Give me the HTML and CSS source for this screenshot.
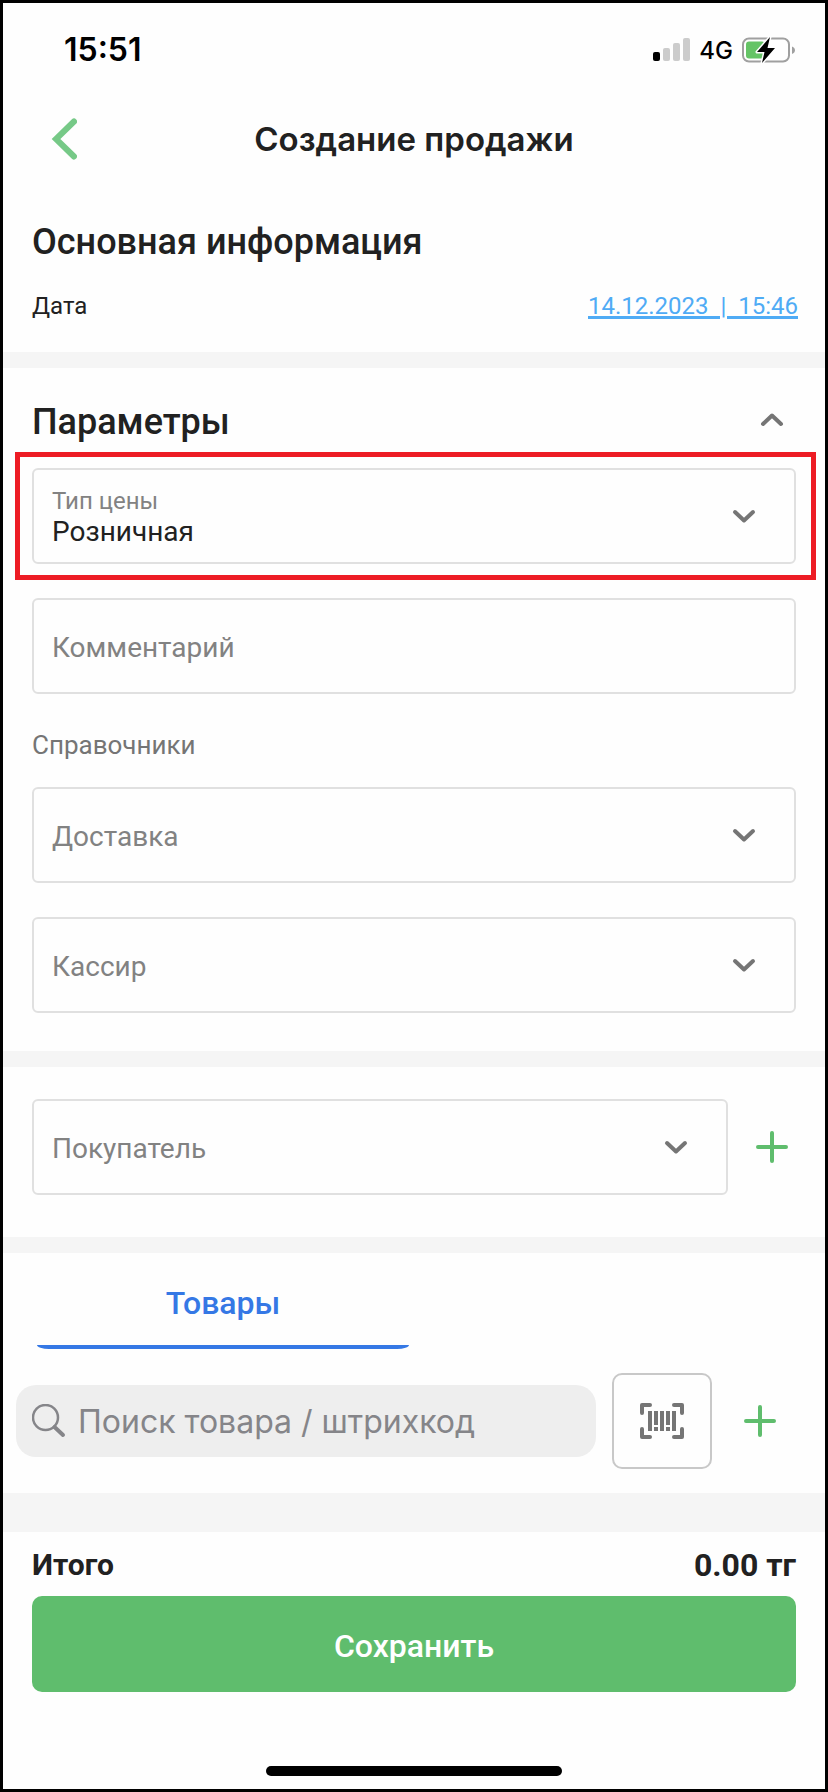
FILE: index.html
```html
<!DOCTYPE html>
<html lang="ru">
<head>
<meta charset="utf-8">
<meta name="viewport" content="width=device-width, initial-scale=1">
<title>Создание продажи</title>
<link rel="stylesheet" href="styles.css">
</head>
<body>
<div class="screen">
  <div class="status">
    <time class="status-time">15:51</time>
    <div class="status-icons">
      <svg width="37" height="24" viewBox="0 0 37 24" aria-hidden="true">
        <rect x="0" y="14" width="7" height="9" rx="2" fill="#000"/>
        <rect x="10" y="10" width="7" height="13" rx="2" fill="#ccc"/>
        <rect x="20" y="5" width="7" height="18" rx="2" fill="#ccc"/>
        <rect x="30" y="0" width="7" height="23" rx="2" fill="#ccc"/>
      </svg>
      <span class="network">4G</span>
      <svg width="54" height="26" viewBox="0 0 54 26" aria-hidden="true">
        <rect x="1" y="1.500" width="46" height="23" rx="6" fill="#fff" stroke="#a0a0a0" stroke-width="2"/>
        <path d="M50 9.500c4 1.500 4 6 0 7.500z" fill="#a0a0a0"/>
        <rect x="4" y="4.500" width="19" height="17" rx="3" fill="#65c466"/>
        <path d="M28 0 15 15h7.500L20 26 33 11h-7.500z" fill="#000" stroke="#fff" stroke-width="3" stroke-linejoin="round" paint-order="stroke"/>
      </svg>
    </div>
  </div>

  <header class="header">
    <button class="icon-button back" type="button" aria-label="Назад">
      <svg width="26" height="42" viewBox="0 0 26 42"><path d="M23 3.500 5 21 23 38.500" fill="none" stroke="#76c987" stroke-width="6" stroke-linecap="round" stroke-linejoin="miter"/></svg>
    </button>
    <h1 class="title">Создание продажи</h1>
  </header>

  <main class="content">
    <section class="section info">
      <h2 class="heading">Основная информация</h2>
      <div class="date-row">
        <span>Дата</span>
        <a class="date" href="#date">14.12.2023&nbsp; | &nbsp;15:46</a>
      </div>
    </section>

    <section class="section params">
      <div class="params-head">
        <h2 class="heading">Параметры</h2>
        <button class="icon-button" type="button" aria-label="Свернуть">
          <svg width="24" height="20" viewBox="0 0 24 20"><path d="M3 12 12 3.500l9 8.500" fill="none" stroke="#757575" stroke-width="4" stroke-linecap="round" stroke-linejoin="round"/></svg>
        </button>
      </div>
      <div class="field labelled highlighted">
        <label class="field-label" for="price">Тип цены</label>
        <select class="control filled" id="price"><option>Розничная</option></select>
        <svg class="arrow" width="24" height="16" viewBox="0 0 24 16"><path d="M3 4l9 8.500L21 4" /></svg>
      </div>
      <div class="field">
        <input class="control" type="text" placeholder="Комментарий" aria-label="Комментарий">
      </div>
      <h3 class="group-title">Справочники</h3>
      <div class="field">
        <select class="control" aria-label="Доставка"><option>Доставка</option></select>
        <svg class="arrow" width="24" height="16" viewBox="0 0 24 16"><path d="M3 4l9 8.500L21 4" /></svg>
      </div>
      <div class="field">
        <select class="control" aria-label="Кассир"><option>Кассир</option></select>
        <svg class="arrow" width="24" height="16" viewBox="0 0 24 16"><path d="M3 4l9 8.500L21 4" /></svg>
      </div>
    </section>

    <section class="section customer">
      <div class="field">
        <select class="control" aria-label="Покупатель"><option>Покупатель</option></select>
        <svg class="arrow" width="24" height="16" viewBox="0 0 24 16"><path d="M3 4l9 8.500L21 4" /></svg>
      </div>
      <button class="icon-button" type="button" aria-label="Добавить покупателя">
        <svg width="32" height="32" viewBox="0 0 32 32"><path d="M16 2v28M2 16h28" stroke="#5fbd6d" stroke-width="4" stroke-linecap="round"/></svg>
      </button>
    </section>

    <section class="section goods">
      <div class="tabs" role="tablist">
        <button class="tab" type="button" role="tab" aria-selected="true">Товары</button>
      </div>
      <div class="search-row">
        <div class="search">
          <svg width="34" height="34" viewBox="0 0 34 34" aria-hidden="true"><g fill="none" stroke="#858589" stroke-linecap="round"><circle cx="13.500" cy="13.500" r="12.500" stroke-width="2.500"/><path d="M22.500 23l8.500 8" stroke-width="4"/></g></svg>
          <input class="search-input" type="search" placeholder="Поиск товара / штрихкод" aria-label="Поиск товара">
        </div>
        <button class="scan" type="button" aria-label="Сканировать штрихкод">
          <svg width="44" height="36" viewBox="0 0 44 36">
            <path d="M2 10V2h8M34 2h8v8M42 26v8h-8M10 34H2v-8" fill="none" stroke="#757575" stroke-width="4" stroke-linecap="round" stroke-linejoin="round"/>
            <path d="M8 8h4v20H8zM14 8h4v14h-4zM14 24h4v4h-4zM20 8h4v20h-4zM26 8h4v14h-4zM26 24h4v4h-4zM32 8h4v20h-4z" fill="#757575"/>
          </svg>
        </button>
        <button class="icon-button add" type="button" aria-label="Добавить товар">
          <svg width="32" height="32" viewBox="0 0 32 32"><path d="M16 2v28M2 16h28" stroke="#5fbd6d" stroke-width="4" stroke-linecap="round"/></svg>
        </button>
      </div>
    </section>
  </main>

  <footer class="footer">
    <div class="total">
      <span class="total-label">Итого</span>
      <span class="total-sum">0.00 тг</span>
    </div>
    <button class="save" type="button">Сохранить</button>
    <div class="home-bar"></div>
  </footer>
</div>
</body>
</html>
```
FILE: styles.css
```css
* {
  box-sizing: border-box;
}

body {
  margin: 0;
  background: #fefefe;
  color: #212121;
  font-family: Roboto, "Noto Sans", sans-serif;
}

h1,
h2,
h3 {
  margin: 0;
}

svg {
  display: block;
  flex: none;
}

button,
input,
select {
  margin: 0;
  font: inherit;
}

.screen {
  display: flex;
  flex-direction: column;
  min-height: 100vh;
  border: 3px solid #000;
}

.status {
  display: flex;
  align-items: center;
  justify-content: space-between;
  padding: 28px 29px 8px 61px;
  color: #000;
  font-family: Inter, sans-serif;
}

.status-time {
  font-size: 32px;
  font-weight: 600;
  line-height: 38px;
}

.status-icons {
  display: flex;
  align-items: center;
  gap: 9px;
}

.network {
  padding-top: 2px;
  font-size: 24px;
  font-weight: 500;
  line-height: 28px;
}

.header {
  display: grid;
  grid-template-columns: 62px 1fr 62px;
  align-items: center;
  padding: 40px 12px;
}

.icon-button {
  display: flex;
  padding: 0;
  border: 0;
  background: none;
  cursor: pointer;
}

.back {
  justify-content: flex-end;
}

.title {
  font-family: Inter, sans-serif;
  font-size: 33px;
  font-weight: 600;
  line-height: 44px;
  text-align: center;
}

.content {
  display: flex;
  flex: 1;
  flex-direction: column;
  gap: 16px;
  padding-bottom: 39px;
  background: #f5f5f5;
}

.section {
  padding: 32px 29px;
  background: #fefefe;
}

.heading {
  font-size: 36px;
  font-weight: 500;
  line-height: 44px;
}

.info {
  padding-top: 19px;
  padding-bottom: 30px;
}

.date-row {
  display: flex;
  justify-content: space-between;
  margin-top: 26px;
  margin-right: -2px;
  font-size: 24px;
  line-height: 32px;
}

.date {
  color: #4fabf5;
  text-decoration-thickness: 3px;
}

.params {
  display: grid;
  gap: 34px;
  padding-bottom: 38px;
}

.params-head {
  display: flex;
  align-items: center;
  justify-content: space-between;
  margin-bottom: -10px;
  padding-right: 12px;
}

.group-title {
  margin-bottom: -8px;
  padding-top: 1px;
  color: #757575;
  font-size: 26px;
  font-weight: 400;
  line-height: 32px;
}

.field {
  position: relative;
  display: grid;
  align-items: center;
}

.field > * {
  grid-area: 1 / 1;
}

.control {
  width: 100%;
  height: 96px;
  padding: 2px 18px 0;
  border: 2px solid #e0e0e0;
  border-radius: 6px;
  outline: 0;
  appearance: none;
  background: #fefefe;
  color: #828282;
  font-size: 28px;
}

.control::placeholder {
  color: #828282;
  opacity: 1;
}

.filled {
  color: #212121;
}

.labelled .control {
  padding-top: 30px;
}

.field-label {
  z-index: 1;
  align-self: start;
  padding: 19px 20px 0;
  color: #828282;
  font-size: 24px;
  line-height: 28px;
}

.arrow {
  justify-self: end;
  margin-right: 40px;
  pointer-events: none;
  fill: none;
  stroke: #757575;
  stroke-width: 4;
  stroke-linecap: round;
  stroke-linejoin: round;
}

.highlighted::after {
  content: "";
  position: absolute;
  inset: -16px -20px -16px -17px;
  border: 5px solid #ed1c24;
  pointer-events: none;
}

.customer {
  display: flex;
  align-items: center;
  gap: 28px;
  padding-right: 37px;
  padding-bottom: 42px;
}

.customer .field {
  flex: 1;
}

.goods {
  padding-top: 0;
  padding-bottom: 24px;
}

.tabs {
  display: grid;
  grid-template-columns: 1fr 1fr;
}

.tab {
  padding: 30px 5px 0;
  border: 0;
  background: none;
  color: #3578e5;
  font-size: 32px;
  font-weight: 500;
  line-height: 40px;
}

.tab::after {
  content: "";
  display: block;
  height: 4px;
  margin-top: 22px;
  border-radius: 0 0 12px 12px / 0 0 4px 4px;
  background: #3578e5;
}

.search-row {
  display: flex;
  align-items: center;
  gap: 16px;
  margin: 24px -16px 0;
}

.search {
  display: flex;
  flex: 1;
  align-items: center;
  gap: 12px;
  min-width: 0;
  height: 72px;
  padding: 0 16px;
  border-radius: 20px;
  background: #eee;
}

.search-input {
  flex: 1;
  min-width: 0;
  padding: 0;
  border: 0;
  outline: 0;
  appearance: none;
  background: none;
  font-family: Inter, sans-serif;
  font-size: 32px;
}

.search-input::placeholder {
  color: #858589;
  opacity: 1;
}

.scan {
  display: grid;
  place-items: center;
  width: 100px;
  height: 96px;
  padding: 0;
  border: 2px solid #c8c8c8;
  border-radius: 10px;
  background: #fefefe;
}

.add {
  margin: 0 36px 0 16px;
}

.footer {
  padding: 13px 29px;
}

.total {
  display: flex;
  align-items: center;
  justify-content: space-between;
  margin-bottom: 11px;
  font-weight: 700;
  line-height: 40px;
}

.total-label {
  font-size: 30px;
}

.total-sum {
  font-size: 32px;
}

.save {
  display: block;
  width: 100%;
  height: 96px;
  padding: 3px 0 0;
  border: 0;
  border-radius: 10px;
  background: #5fbd6d;
  color: #fff;
  font-size: 32px;
  font-weight: 500;
}

.home-bar {
  width: 296px;
  height: 10px;
  margin: 74px auto 0;
  border-radius: 5px;
  background: #000;
}
```
